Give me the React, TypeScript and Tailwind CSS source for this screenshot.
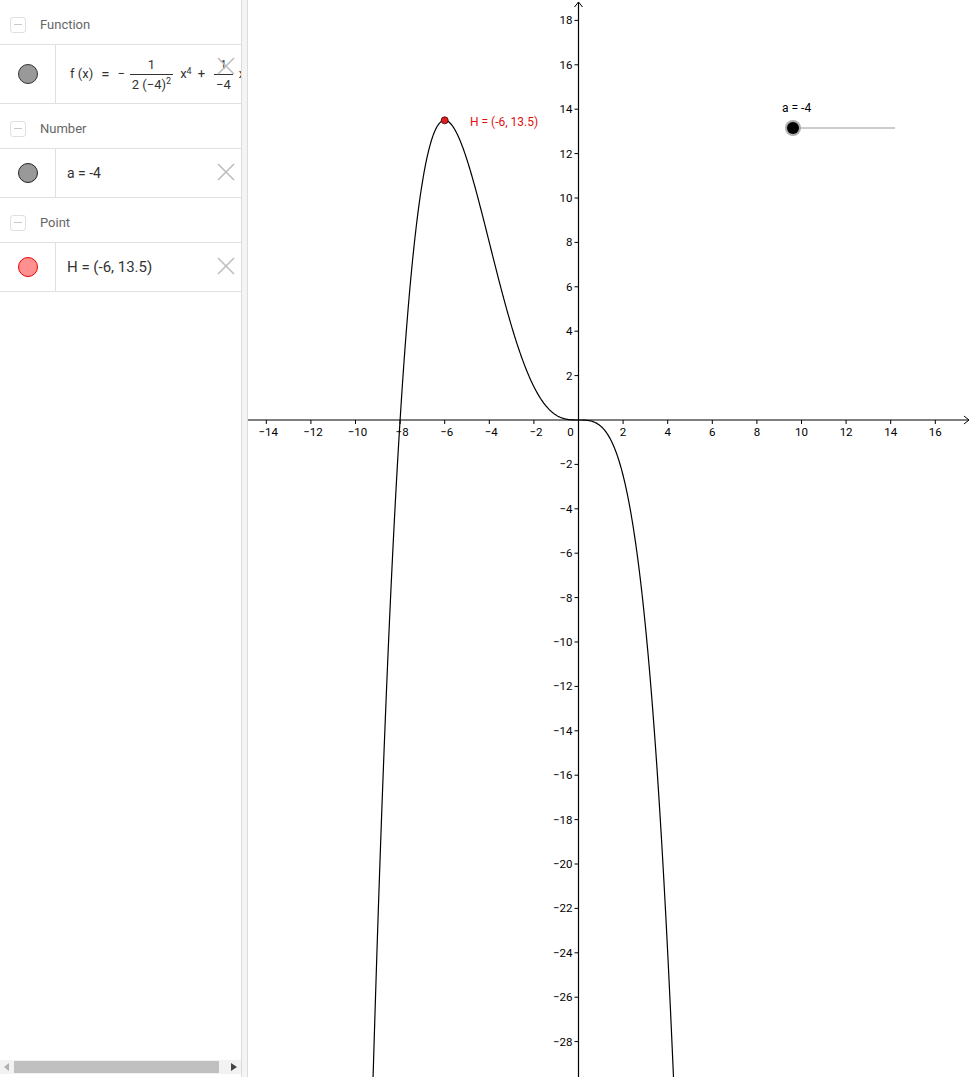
import React from 'react';

// coordinate system of the graphics view (page pixels)
const OX = 579.5;
const OY = 420;
const SX = 22.3;
const SY = 22.2;

const px = (x: number) => OX + x * SX;
const py = (y: number) => OY - y * SY;

const f = (x: number) => -Math.pow(x, 4) / 32 - Math.pow(x, 3) / 4;

function curvePath() {
  const pts: string[] = [];
  for (let x = -9.4; x <= 4.5; x += 0.02) {
    const y = f(x);
    if (y < -34) continue;
    pts.push(`${px(x).toFixed(2)},${py(y).toFixed(2)}`);
  }
  return 'M' + pts.join(' L');
}

const fmt = (n: number) => (n < 0 ? '\u2212' + Math.abs(n) : String(n));

const xTicks = [-14, -12, -10, -8, -6, -4, -2, 2, 4, 6, 8, 10, 12, 14, 16];
const yTicks = [18, 16, 14, 12, 10, 8, 6, 4, 2, -2, -4, -6, -8, -10, -12, -14, -16, -18, -20, -22, -24, -26, -28];

function Collapse() {
  return (
    <span className="w-4 h-4 rounded-[3px] border border-[#e0e0e0] flex items-center justify-center shrink-0">
      <span className="w-2 h-px bg-[#c8c8c8]" />
    </span>
  );
}

function Header({ label }: { label: string }) {
  return (
    <div className="h-[45px] flex items-center gap-[14px] pl-[10px] pt-[5px] border-b border-[#e0e0e0]">
      <Collapse />
      <span className="text-[13px] text-[#666]">{label}</span>
    </div>
  );
}

function Close({ top }: { top: string }) {
  return (
    <svg className={`absolute right-[5px] ${top}`} width="20" height="20" viewBox="0 0 20 20">
      <path d="M2 2 L18 18 M18 2 L2 18" stroke="#bdbdbd" strokeWidth="1.6" fill="none" />
    </svg>
  );
}

function Row({ height, dot, children, closeTop }: { height: string; dot: string; children: React.ReactNode; closeTop: string }) {
  return (
    <div className={`${height} flex border-b border-[#e0e0e0] relative overflow-hidden`}>
      <div className="w-[56px] border-r border-[#e0e0e0] flex items-center justify-center shrink-0">
        <span className={`w-5 h-5 rounded-full border ${dot}`} />
      </div>
      <div className="flex items-center pl-[11px] whitespace-nowrap">{children}</div>
      <Close top={closeTop} />
    </div>
  );
}

function Frac({ num, den }: { num: React.ReactNode; den: React.ReactNode }) {
  return (
    <span className="inline-flex flex-col items-center mx-[3px] leading-none">
      <span className="text-[13px] pb-[3px] px-[2px]">{num}</span>
      <span className="text-[13px] pt-[3px] px-[2px] border-t border-[#333]">{den}</span>
    </span>
  );
}

export default function App() {
  return (
    <div className="w-[972px] h-[1077px] flex bg-white text-[#333] overflow-hidden" style={{ fontFamily: 'Roboto, "Liberation Sans", sans-serif' }}>
      {/* algebra view */}
      <div className="w-[242px] shrink-0 border-r border-[#dcdcdc] flex flex-col">
        <div className="flex-1 overflow-hidden">
          <Header label="Function" />
          <Row height="h-[59px]" dot="bg-[#999] border-[#333]" closeTop="top-[11px]">
            <span className="text-[13px] flex items-center pl-[3px]">
              <span>f (x)</span>
              <span className="text-[15px] mx-[8px]">=</span>
              <span className="mr-[2px]">−</span>
              <Frac num="1" den={<span>2 (−4)<sup className="text-[9px]">2</sup></span>} />
              <span className="ml-[4px]">x<sup className="text-[9px]">4</sup></span>
              <span className="mx-[6px]">+</span>
              <Frac num="1" den="−4" />
              <span className="ml-[3px]">x<sup className="text-[9px]">3</sup></span>
            </span>
          </Row>
          <Header label="Number" />
          <Row height="h-[49px]" dot="bg-[#999] border-[#222]" closeTop="top-[13px]">
            <span className="text-[14px]">a = -4</span>
          </Row>
          <Header label="Point" />
          <Row height="h-[49px]" dot="bg-[#ff9090] border-[#e00]" closeTop="top-[13px]">
            <span className="text-[15px]">H = (-6, 13.5)</span>
          </Row>
        </div>
        <div className="h-[14px] mb-[3px] bg-[#f2f2f2] flex items-center px-[4px] gap-[4px]">
          <svg width="6" height="8" viewBox="0 0 6 8"><path d="M5 0 L0 4 L5 8 Z" fill="#b0b0b0" /></svg>
          <div className="w-[205px] h-[12px] bg-[#c0c0c0]" />
          <div className="flex-1" />
          <svg width="6" height="8" viewBox="0 0 6 8"><path d="M0 0 L6 4 L0 8 Z" fill="#444" /></svg>
        </div>
      </div>
      {/* splitter */}
      <div className="w-[6px] shrink-0 bg-[#f4f4f4] border-r border-[#dcdcdc]" />
      {/* graphics view */}
      <div className="flex-1 relative">
        <svg className="block" width="723" height="1077" viewBox="249 0 723 1077" style={{ fontFamily: 'Roboto, "Liberation Sans", sans-serif' }}>
          <defs>
            <clipPath id="view">
              <rect x="249" y="0" width="723" height="1077" />
            </clipPath>
          </defs>
          {/* x axis */}
          <line x1="249" y1={OY} x2="970" y2={OY} stroke="#000" strokeWidth="1.2" />
          <path d={`M965 ${OY - 4} L970 ${OY} L965 ${OY + 4}`} stroke="#000" strokeWidth="1" fill="none" />
          {/* y axis */}
          <line x1={OX} y1="1077" x2={OX} y2="2" stroke="#000" strokeWidth="1.2" />
          <path d={`M${OX - 4} 7 L${OX} 2 L${OX + 4} 7`} stroke="#000" strokeWidth="1" fill="none" />
          {xTicks.map((t) => (
            <g key={'x' + t}>
              <line x1={px(t)} y1={OY} x2={px(t)} y2={OY + 4} stroke="#000" strokeWidth="1" />
              <text x={px(t) + (t < 0 ? 2 : 0)} y={OY + 16} fontSize="11.5" textAnchor="middle" fill="#000">{fmt(t)}</text>
            </g>
          ))}
          <text x={OX - 8} y={OY + 16} fontSize="11.5" textAnchor="middle" fill="#000">0</text>
          {yTicks.map((t) => (
            <g key={'y' + t}>
              <line x1={OX - 4} y1={py(t)} x2={OX} y2={py(t)} stroke="#000" strokeWidth="1" />
              <text x={OX - 6} y={py(t) + 4} fontSize="11.5" textAnchor="end" fill="#000">{fmt(t)}</text>
            </g>
          ))}
          {/* function graph */}
          <path d={curvePath()} stroke="#000" strokeWidth="1.2" fill="none" clipPath="url(#view)" />
          {/* point H */}
          <circle cx={px(-6)} cy={py(13.5)} r="3.5" fill="#e02020" stroke="#400" strokeWidth="0.8" />
          <text x="471" y="126" fontSize="12" fill="#e01010">H = (-6, 13.5)</text>
          {/* slider a */}
          <text x="783" y="112" fontSize="12" fill="#000">a = -4</text>
          <line x1="794" y1="128" x2="896" y2="128" stroke="#999" strokeWidth="1" />
          <circle cx="794" cy="128" r="8" fill="#999" opacity="0.8" />
          <circle cx="794" cy="128" r="6" fill="#000" />
        </svg>
      </div>
    </div>
  );
}
